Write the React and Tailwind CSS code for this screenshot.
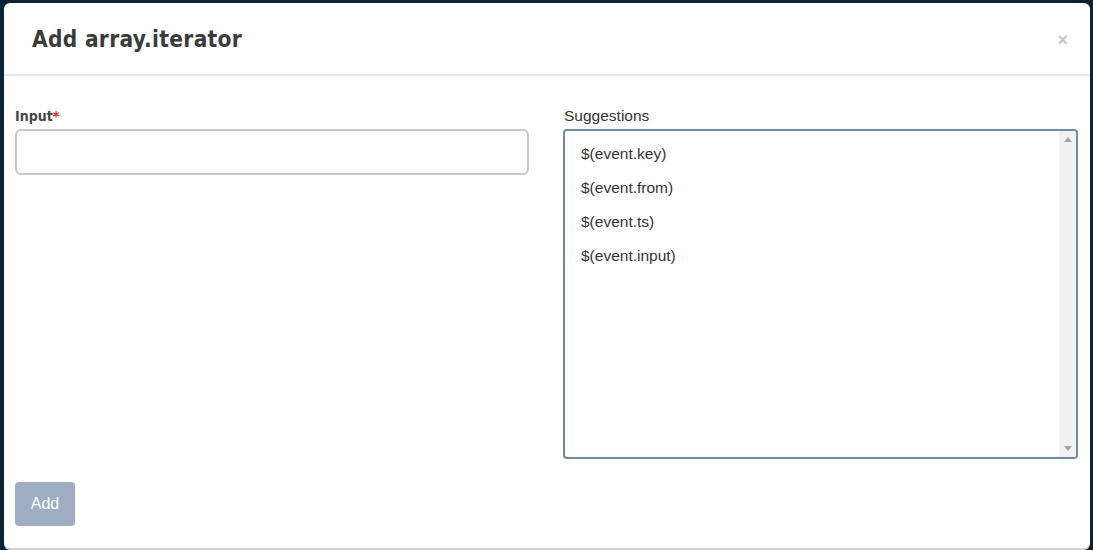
export default function App() {
  const items = ["$(event.key)", "$(event.from)", "$(event.ts)", "$(event.input)"];
  const din = { fontFamily: '"DejaVu Sans Condensed", "DejaVu Sans", sans-serif' };
  const arial = { fontFamily: '"Liberation Sans", Arial, sans-serif' };
  return (
    <div className="w-[1093px] h-[550px] bg-[#0c2337] pt-[3px] pl-[4px] overflow-hidden">
      <div className="w-[1086px] h-[545px] bg-white rounded-[6px] flex flex-col shadow-[0_2px_0_#d0d4d8]">
        <div className="h-[73px] flex items-center justify-between pl-[28px] pr-[22px] pt-[2px] border-b-2 border-[#e6e7e9]">
          <h1 className="text-[22.5px] font-bold text-[#3c3c3c] tracking-[0.3px]" style={din}>
            Add array.iterator
          </h1>
          <span className="text-[#c3c7cc] text-[18px] font-bold leading-none" style={arial}>×</span>
        </div>
        <div className="flex-1 flex flex-col pl-[11px] pr-[12px] pt-[31px]">
          <div className="flex gap-[34px]">
            <div className="w-[514px] flex flex-col">
              <label className="text-[14px] font-bold text-[#454545] leading-[18px] mb-[4px]" style={din}>
                Input<span className="text-[#e02020]">*</span>
              </label>
              <input className="h-[46px] w-full border-2 border-[#c4c7cb] rounded-[6px] outline-none px-3" />
            </div>
            <div className="w-[515px] flex flex-col" style={arial}>
              <label className="text-[15.5px] text-[#333] leading-[18px] mb-[4px] pl-[1px]">Suggestions</label>
              <div className="h-[330px] border-2 border-[#7089a6] rounded-[4px] flex overflow-hidden">
                <div className="flex-1 flex flex-col pt-[14px] pl-[16px]">
                  {items.map((t) => (
                    <div key={t} className="h-[34px] text-[15.5px] text-[#333] leading-[18px]">{t}</div>
                  ))}
                </div>
                <div className="w-[17px] bg-[#f1f1f1] flex flex-col justify-between items-center py-[6px]">
                  <svg width="8" height="5" viewBox="0 0 8 5"><path d="M4 0L8 5H0z" fill="#a3a3a3" /></svg>
                  <svg width="8" height="5" viewBox="0 0 8 5"><path d="M0 0H8L4 5z" fill="#a3a3a3" /></svg>
                </div>
              </div>
            </div>
          </div>
          <div className="mt-[23px]">
            <button className="w-[60px] h-[44px] rounded-[4px] bg-[#9eadc1] text-white text-[16px]" style={arial}>
              Add
            </button>
          </div>
        </div>
      </div>
    </div>
  );
}
